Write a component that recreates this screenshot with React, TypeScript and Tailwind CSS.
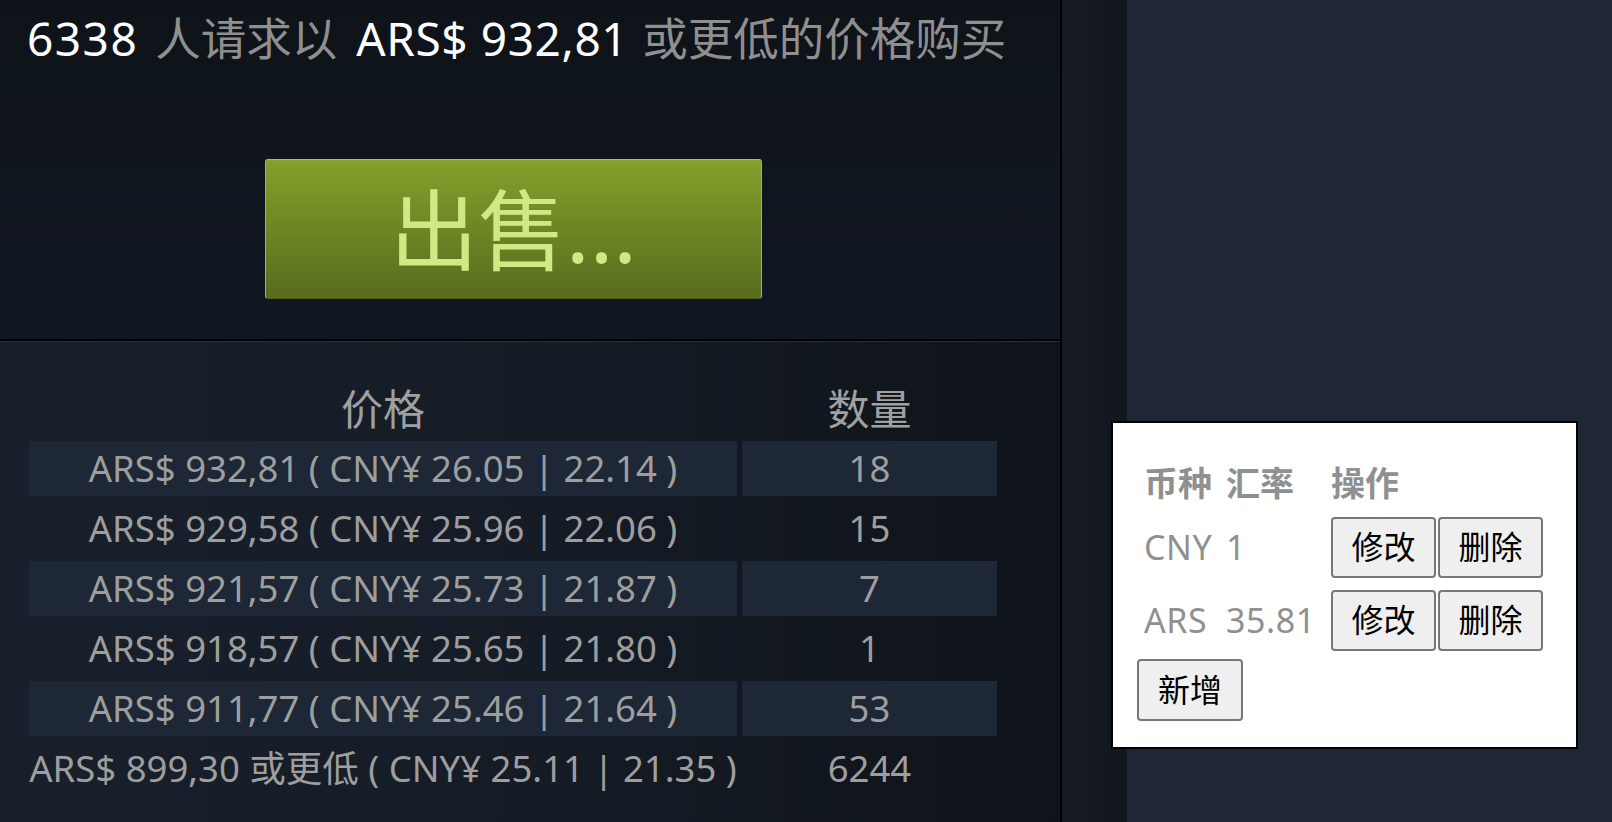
import React from "react";

type Row = { price: React.ReactNode; qty: string; hl: boolean };

const rows: Row[] = [
  { price: "ARS$ 932,81 ( CNY¥ 26.05 | 22.14 )", qty: "18", hl: true },
  { price: "ARS$ 929,58 ( CNY¥ 25.96 | 22.06 )", qty: "15", hl: false },
  { price: "ARS$ 921,57 ( CNY¥ 25.73 | 21.87 )", qty: "7", hl: true },
  { price: "ARS$ 918,57 ( CNY¥ 25.65 | 21.80 )", qty: "1", hl: false },
  { price: "ARS$ 911,77 ( CNY¥ 25.46 | 21.64 )", qty: "53", hl: true },
  { price: "ARS$ 899,30 或更低 ( CNY¥ 25.11 | 21.35 )", qty: "6244", hl: false },
];

function PopBtn({ label, wide }: { label: string; wide?: boolean }) {
  return (
    <button
      className={`flex ${wide ? "h-[62px] w-[106px]" : "h-[61px] w-[105px]"} items-center justify-center rounded-[4px] border-2 border-[#777777] bg-[#efefef] text-[32px] leading-none text-black`}
    >
      {label}
    </button>
  );
}

export default function App() {
  return (
    <div className="relative flex h-[822px] w-[1612px] overflow-hidden bg-[#1f2737] font-['Noto_Sans','Noto_Sans_CJK_SC',sans-serif]">
      {/* left panel */}
      <div className="flex w-[1060px] shrink-0 flex-col">
        <div className="h-[339px] bg-gradient-to-b from-[#0e1319] to-[#111722] pl-[27px] pt-[15px]">
          <div className="flex items-baseline whitespace-nowrap leading-[46px]">
            <span className="text-[46px] tracking-[1.5px] text-white">6338</span>
            <span className="ml-[17px] text-[45.5px] text-[#8f8f8f]">人请求以</span>
            <span className="ml-[19px] text-[46px] tracking-[0.6px] text-white">ARS$ 932,81</span>
            <span className="ml-[14px] text-[45.5px] text-[#8f8f8f]">或更低的价格购买</span>
          </div>
          <div className="ml-[238px] mt-[98px] flex h-[140px] w-[497px] items-center justify-center rounded-[3px] border border-b-[#4f601b] border-l-[#9dbd3c] border-r-[#9dbd3c] border-t-[#a6c746] bg-gradient-to-b from-[#83a12b] to-[#596c1e] text-[88px] leading-none text-[#d2e885]">
            出售...
          </div>
        </div>
        <div className="h-[2px] bg-black" />
        <div className="h-[1px] bg-[#27303c]" />
        <div className="flex-1 bg-gradient-to-r from-[#18202c] via-[#151c26] to-[#0f1319] pl-[29px] pt-[39px]">
          <div className="grid grid-cols-[708px_255px] gap-[5px] whitespace-nowrap">
            <div className="flex h-[55px] items-center justify-center text-[42px] leading-none text-[#a0a0a0]">
              价格
            </div>
            <div className="flex h-[55px] items-center justify-center text-[42px] leading-none text-[#a0a0a0]">
              数量
            </div>
            {rows.map((r, i) => (
              <React.Fragment key={i}>
                <div
                  className={`flex h-[55px] items-center justify-center overflow-visible text-[36.5px] leading-none text-[#9e9e9e] ${r.hl ? "bg-[#1d2735]" : ""}`}
                >
                  {r.price}
                </div>
                <div
                  className={`flex h-[55px] items-center justify-center text-[36.5px] leading-none text-[#9e9e9e] ${r.hl ? "bg-[#1d2735]" : ""}`}
                >
                  {r.qty}
                </div>
              </React.Fragment>
            ))}
          </div>
        </div>
      </div>
      <div className="w-[2px] shrink-0 bg-black" />
      <div className="w-[65px] shrink-0 bg-gradient-to-r from-[#151a23] to-[#11161e]" />
      <div className="flex-1 bg-[#1f2737]" />

      {/* floating popup */}
      <div className="absolute left-[1111px] top-[421px] w-[467px] border-2 border-black bg-white pb-[26px] pl-[24px] pt-[34px] text-[#909090]">
        <div className="ml-[7px] grid h-[52px] grid-cols-[82px_105px_auto] items-center text-[34px] font-bold leading-none">
          <span>币种</span>
          <span>汇率</span>
          <span>操作</span>
        </div>
        <div className="ml-[7px] mt-[5px] grid h-[66px] grid-cols-[82px_105px_auto] items-center text-[34px] leading-none tracking-[0.6px]">
          <span>CNY</span>
          <span>1</span>
          <div className="flex gap-[2px] tracking-normal">
            <PopBtn label="修改" />
            <PopBtn label="删除" />
          </div>
        </div>
        <div className="ml-[7px] mt-[7px] grid h-[66px] grid-cols-[82px_105px_auto] items-center text-[34px] leading-none tracking-[0.6px]">
          <span>ARS</span>
          <span>35.81</span>
          <div className="flex gap-[2px] tracking-normal">
            <PopBtn label="修改" />
            <PopBtn label="删除" />
          </div>
        </div>
        <div className="mt-[6px]">
          <PopBtn label="新增" wide />
        </div>
      </div>
    </div>
  );
}
